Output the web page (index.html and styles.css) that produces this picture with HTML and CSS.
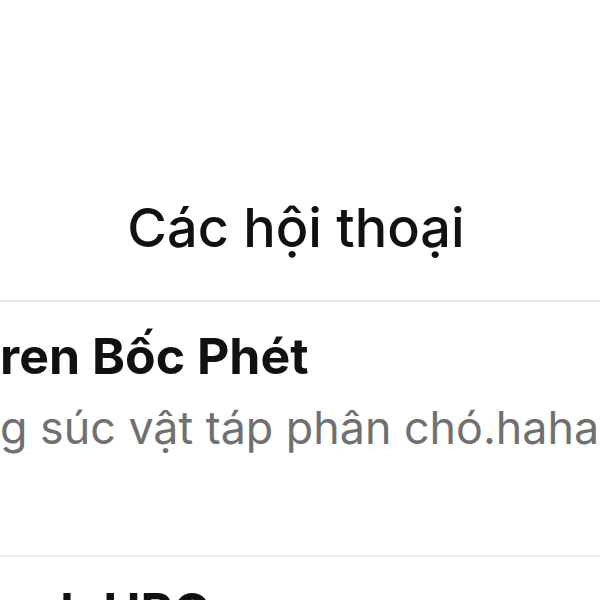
FILE: index.html
```html
<!DOCTYPE html>
<html lang="vi">
<head>
    <meta charset="UTF-8">
    <meta name="viewport" content="width=device-width, initial-scale=1.0">
    <title>Các hội thoại</title>
    <link rel="stylesheet" href="styles.css">
</head>
<body>
    <div class="header">
        <h1 class="title">Các hội thoại</h1>
    </div>
    <div class="list">
        <div class="row">
            <div class="name">ren Bốc Phét</div>
            <div class="preview">g súc vật táp phân chó.haha</div>
        </div>
        <div class="row">
            <div class="name">anh HPG</div>
            <div class="preview">&nbsp;</div>
        </div>
    </div>
</body>
</html>
```

FILE: styles.css
```css
body {
    margin: 0;
    background: #fff;
    font-family: Inter, "Noto Sans", sans-serif;
    color: #111;
    overflow: hidden;
}
.header {
    height: 300px;
    display: flex;
    align-items: flex-end;
    justify-content: center;
}
.title {
    margin: 0 8px 40px 0;
    font-size: 54px;
    font-weight: 500;
    line-height: 64px;
}
.list {
    border-top: 2px solid #e4e4e4;
}
.row {
    height: 255px;
    padding: 24px 0 0 0;
    box-sizing: border-box;
    border-bottom: 2px solid #ececec;
    white-space: nowrap;
    overflow: hidden;
}
.name {
    font-size: 50px;
    font-weight: 700;
    line-height: 60px;
}
.preview {
    margin-top: 16px;
    font-size: 44.8px;
    color: #707070;
    line-height: 52px;
}
```
